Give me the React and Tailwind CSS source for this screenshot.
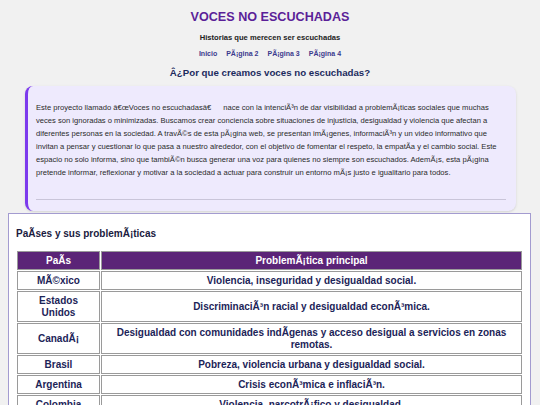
const paises = [
  { pais: 'MÃ©xico', problema: 'Violencia, inseguridad y desigualdad social.' },
  { pais: 'Estados Unidos', problema: 'DiscriminaciÃ³n racial y desigualdad econÃ³mica.' },
  { pais: 'CanadÃ¡', problema: 'Desigualdad con comunidades indÃgenas y acceso desigual a servicios en zonas remotas.' },
  { pais: 'Brasil', problema: 'Pobreza, violencia urbana y desigualdad social.' },
  { pais: 'Argentina', problema: 'Crisis econÃ³mica e inflaciÃ³n.' },
  { pais: 'Colombia', problema: 'Violencia, narcotrÃ¡fico y desigualdad.' },
];

const links = ['Inicio', 'PÃ¡gina 2', 'PÃ¡gina 3', 'PÃ¡gina 4'];

const App = () => {
  return (
    <div className="min-h-[405px] bg-[#f1f1f1] font-['Liberation_Sans',Arial,sans-serif] pb-6">
      <header className="pt-[10px] text-center">
        <h1 className="text-[12.6px] leading-[14px] font-bold text-[#5b1f98]">VOCES NO ESCUCHADAS</h1>
        <p className="mt-[9px] text-[7.6px] leading-[10px] font-bold text-[#222]">Historias que merecen ser escuchadas</p>
        <nav className="mt-[6px] flex justify-center gap-[9px] text-[7px] leading-[10px] font-bold text-[#3b3a8d]">
          {links.map((l) => (
            <a key={l} href="#">{l}</a>
          ))}
        </nav>
        <h2 className="mt-[8px] text-[9.7px] leading-[12px] font-bold text-[#1c2b5e]">Â¿Por que creamos voces no escuchadas?</h2>
      </header>

      <section className="mt-[7px] ml-[25px] mr-[24px] rounded-[8px] border-l-[3px] border-[#7c3aed] bg-[#eeeafd] pt-[15px] pb-[11px] pl-[8px] pr-[10px] shadow-sm">
        <p className="text-[7.6px] leading-[13px] text-[#2a2a2a]">
          Este proyecto llamado â€œVoces no escuchadasâ€<span className="inline-block w-[12px]"> </span>nace con la intenciÃ³n de dar visibilidad a problemÃ¡ticas sociales que muchas veces son ignoradas o minimizadas. Buscamos crear conciencia sobre situaciones de injusticia, desigualdad y violencia que afectan a diferentes personas en la sociedad. A travÃ©s de esta pÃ¡gina web, se presentan imÃ¡genes, informaciÃ³n y un video informativo que invitan a pensar y cuestionar lo que pasa a nuestro alrededor, con el objetivo de fomentar el respeto, la empatÃa y el cambio social. Este espacio no solo informa, sino que tambiÃ©n busca generar una voz para quienes no siempre son escuchados. AdemÃ¡s, esta pÃ¡gina pretende informar, reflexionar y motivar a la sociedad a actuar para construir un entorno mÃ¡s justo e igualitario para todos.
        </p>
        <hr className="mt-[20px] border-t border-[#c9c5d9]" />
      </section>

      <section className="mt-[2px] ml-[8px] mr-[9px] border border-[#a39bd0] bg-white px-[7px] pt-[14px] pb-4">
        <h3 className="text-[10px] leading-[12px] font-bold text-[#1a1a40]">PaÃses y sus problemÃ¡ticas</h3>
        <table className="mt-[10px] w-full border-separate border-spacing-[1px] text-[10px] leading-[12px] font-bold">
          <thead>
            <tr className="text-white">
              <th className="w-[83px] border border-[#9a9a9a] bg-[#5b2477] pt-[3px] pb-[2px]">PaÃs</th>
              <th className="border border-[#9a9a9a] bg-[#5b2477] pt-[3px] pb-[2px]">ProblemÃ¡tica principal</th>
            </tr>
          </thead>
          <tbody className="text-[#1c2458]">
            {paises.map((p) => (
              <tr key={p.pais}>
                <td className="border border-[#9a9a9a] px-[4px] pt-[3px] pb-[2px] text-center">{p.pais}</td>
                <td className="border border-[#9a9a9a] px-[4px] pt-[3px] pb-[2px] text-center">{p.problema}</td>
              </tr>
            ))}
          </tbody>
        </table>
      </section>
    </div>
  );
};

export default App;
